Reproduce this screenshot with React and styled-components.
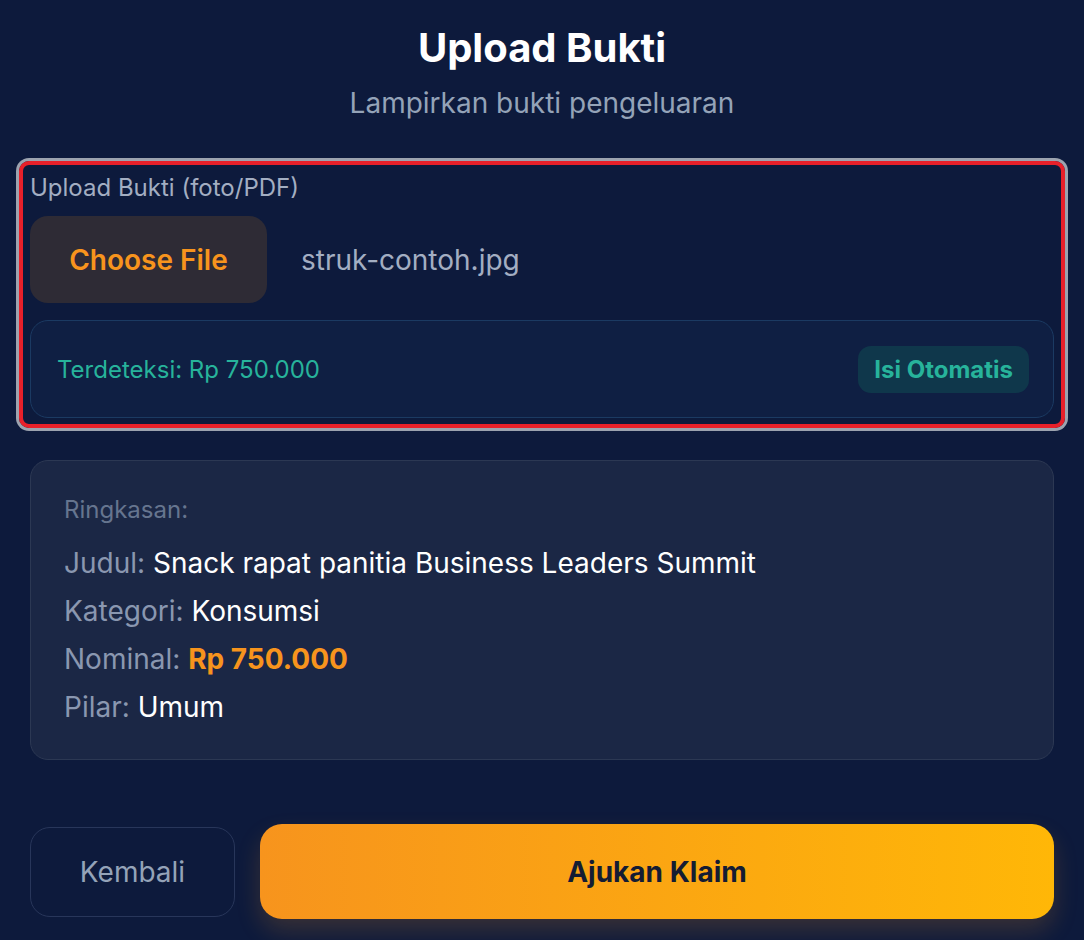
import React from 'react'
import styled, { createGlobalStyle } from 'styled-components'

const GlobalStyle = createGlobalStyle`
  html, body {
    margin: 0;
    padding: 0;
    background: #0d1a3c;
  }
  body {
    font-family: Inter, "Noto Sans", "Liberation Sans", sans-serif;
    -webkit-font-smoothing: antialiased;
  }
`

const Page = styled.div`
  min-height: 940px;
  background: #0d1a3c;
  padding-top: 26px;
  box-sizing: border-box;
`

const Header = styled.div`
  display: flex;
  flex-direction: column;
  align-items: center;
`

const Title = styled.h1`
  margin: 0;
  font-size: 40px;
  line-height: 44px;
  font-weight: 700;
  color: #ffffff;
`

const Subtitle = styled.p`
  margin: 17px 0 0;
  font-size: 28px;
  line-height: 32px;
  color: #94a3b8;
`

const UploadBox = styled.div`
  margin: 42px 19px 0;
  border: 4px solid #e8202a;
  border-radius: 10px;
  box-shadow: 0 0 0 3px #9ca3af;
  padding: 11px 7px 6px 7px;
  display: flex;
  flex-direction: column;
`

const FieldLabel = styled.div`
  font-size: 24px;
  line-height: 24px;
  color: #a3aec2;
`

const FileRow = styled.div`
  display: flex;
  align-items: center;
  gap: 34px;
  margin-top: 16px;
`

const ChooseButton = styled.button`
  width: 237px;
  height: 87px;
  border: none;
  border-radius: 18px;
  background: #2e2b35;
  color: #f7941d;
  font-family: inherit;
  font-size: 28px;
  font-weight: 600;
  cursor: pointer;
`

const FileName = styled.span`
  font-size: 28px;
  color: #a3aec2;
`

const Detected = styled.div`
  margin-top: 17px;
  height: 98px;
  box-sizing: border-box;
  border: 1px solid #1b3a62;
  border-radius: 18px;
  background: #0f1f43;
  display: flex;
  align-items: center;
  justify-content: space-between;
  padding: 0 24px 0 26px;
`

const DetectedText = styled.span`
  font-size: 24px;
  color: #27b39b;
`

const AutoFill = styled.button`
  height: 47px;
  padding: 0 16px;
  border: none;
  border-radius: 13px;
  background: #0f374b;
  color: #27b39b;
  font-family: inherit;
  font-size: 24px;
  font-weight: 700;
`

const Summary = styled.div`
  margin: 32px 30px 0;
  border: 1px solid #2c3853;
  border-radius: 18px;
  background: #1b2745;
  padding: 37px 33px 28px;
`

const SummaryHead = styled.div`
  font-size: 24px;
  line-height: 24px;
  color: #66758f;
  margin-bottom: 17px;
`

const Row = styled.div`
  font-size: 28px;
  line-height: 48px;
  color: #ffffff;
`

const Key = styled.span`
  color: #8a97b0;
`

const Value = styled.span`
  color: ${p => (p.$accent ? '#f7941d' : '#ffffff')};
  font-weight: ${p => (p.$accent ? 700 : 400)};
`

const Actions = styled.div`
  margin: 64px 30px 0;
  display: flex;
  align-items: center;
  gap: 25px;
`

const BackButton = styled.button`
  width: 205px;
  height: 90px;
  border: 1px solid #28365a;
  border-radius: 20px;
  background: transparent;
  color: #94a3b8;
  font-family: inherit;
  font-size: 28px;
  cursor: pointer;
`

const SubmitButton = styled.button`
  flex: 1;
  height: 95px;
  border: none;
  border-radius: 22px;
  background: linear-gradient(90deg, #f7941d 0%, #ffb707 100%);
  color: #141c33;
  font-family: inherit;
  font-size: 28px;
  font-weight: 700;
  box-shadow: 0 12px 24px rgba(247, 148, 29, 0.18);
  cursor: pointer;
`

export default function App() {
  return (
    <>
      <GlobalStyle />
      <Page>
        <Header>
          <Title>Upload Bukti</Title>
          <Subtitle>Lampirkan bukti pengeluaran</Subtitle>
        </Header>

        <UploadBox>
          <FieldLabel>Upload Bukti (foto/PDF)</FieldLabel>
          <FileRow>
            <ChooseButton>Choose File</ChooseButton>
            <FileName>struk-contoh.jpg</FileName>
          </FileRow>
          <Detected>
            <DetectedText>Terdeteksi: Rp 750.000</DetectedText>
            <AutoFill>Isi Otomatis</AutoFill>
          </Detected>
        </UploadBox>

        <Summary>
          <SummaryHead>Ringkasan:</SummaryHead>
          <Row><Key>Judul:</Key> <Value>Snack rapat panitia Business Leaders Summit</Value></Row>
          <Row><Key>Kategori:</Key> <Value>Konsumsi</Value></Row>
          <Row><Key>Nominal:</Key> <Value $accent>Rp 750.000</Value></Row>
          <Row><Key>Pilar:</Key> <Value>Umum</Value></Row>
        </Summary>

        <Actions>
          <BackButton>Kembali</BackButton>
          <SubmitButton>Ajukan Klaim</SubmitButton>
        </Actions>
      </Page>
    </>
  )
}
